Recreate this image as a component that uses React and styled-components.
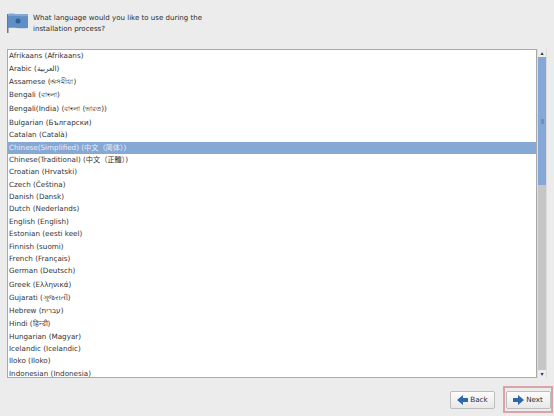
import React from "react"
import styled, { createGlobalStyle } from "styled-components"

const languages = [
	{ name: "Afrikaans (Afrikaans)", h: 12.5 },
	{ name: "Arabic (العربية)", h: 12.5 },
	{ name: "Assamese (অসমীয়া)", h: 13 },
	{ name: "Bengali (বাংলা)", h: 13.5 },
	{ name: "Bengali(India) (বাংলা (ভারত))", h: 14 },
	{ name: "Bulgarian (Български)", h: 13.5 },
	{ name: "Catalan (Català)", h: 12.5 },
	{ name: "Chinese(Simplified) (中文（简体）)", selected: true },
	{ name: "Chinese(Traditional) (中文（正體）)" },
	{ name: "Croatian (Hrvatski)" },
	{ name: "Czech (Čeština)" },
	{ name: "Danish (Dansk)" },
	{ name: "Dutch (Nederlands)" },
	{ name: "English (English)" },
	{ name: "Estonian (eesti keel)" },
	{ name: "Finnish (suomi)" },
	{ name: "French (Français)" },
	{ name: "German (Deutsch)" },
	{ name: "Greek (Ελληνικά)", h: 13 },
	{ name: "Gujarati (ગુજરાતી)", h: 13 },
	{ name: "Hebrew (עברית)", h: 13 },
	{ name: "Hindi (हिन्दी)", h: 13 },
	{ name: "Hungarian (Magyar)", h: 13 },
	{ name: "Icelandic (Icelandic)", h: 12.6 },
	{ name: "Iloko (Iloko)", h: 12.6 },
	{ name: "Indonesian (Indonesia)" },
]

const Flag = () => (
	<svg width="21" height="20" viewBox="0 0 21 20">
		<rect x="0" y="1" width="1.5" height="19" fill="#6f7a78" />
		<path d="M1 1 C6 0 10 2 21 1 L21 15 C12 16 7 14 1 15 Z" fill="#5f8fc4" />
		<path d="M1 1 C6 0 10 2 21 1 L21 3 C12 4 7 2 1 3 Z" fill="#86a9d2" />
		<circle cx="11" cy="8" r="2.5" fill="#2f5f9c" />
	</svg>
)

const Arrow = ({ flip }) => (
	<svg width="11" height="10" viewBox="0 0 11 10" style={{ transform: flip ? "scaleX(-1)" : "none" }}>
		<path d="M0 3 H5 V0 L11 5 L5 10 V7 H0 Z" fill="#2f68a6" />
	</svg>
)

const App = () => (
	<Page>
		<GlobalStyle />
		<Header>
			<Flag />
			<Question>What language would you like to use during the<br />installation process?</Question>
		</Header>
		<ListRow>
			<ListBox>
				{languages.map(l => (
					<Item key={l.name} $selected={l.selected} $h={l.h}>{l.name}</Item>
				))}
			</ListBox>
			<Scrollbar>
				<ScrollButton>▴</ScrollButton>
				<Thumb><Grip /></Thumb>
				<Track />
				<ScrollButton>▾</ScrollButton>
			</Scrollbar>
		</ListRow>
		<Footer>
			<Button><Arrow flip />Back</Button>
			<Highlight>
				<Button><Arrow />Next</Button>
			</Highlight>
		</Footer>
	</Page>
)

const GlobalStyle = createGlobalStyle`
	html, body {
		margin: 0;
		padding: 0;
		background: #ececec;
	}
`

const Page = styled.div`
	width: 554px;
	height: 416px;
	overflow: hidden;
	display: flex;
	flex-direction: column;
	font-family: "DejaVu Sans", "Noto Sans CJK SC", sans-serif;
	color: #2e2e2e;
	background: #ececec;
`

const Header = styled.div`
	display: flex;
	align-items: flex-start;
	gap: 5px;
	height: 36px;
	padding: 13px 0 0 7px;
`

const Question = styled.div`
	font-size: 7.05px;
	line-height: 10.5px;
`

const ListRow = styled.div`
	display: flex;
	height: 329px;
	padding-left: 7px;
`

const ListBox = styled.div`
	width: 530px;
	height: 100%;
	overflow: hidden;
	box-sizing: border-box;
	background: #fff;
	border: 1px solid #a9a9a9;
`

const Item = styled.div`
	height: ${p => p.$h || 12.4}px;
	line-height: ${p => p.$h || 12.4}px;
	padding-left: 1px;
	font-size: 7.2px;
	white-space: nowrap;
	color: ${p => p.$selected ? "#e8eef7" : "#333"};
	background: ${p => p.$selected ? "#86a8d4" : "transparent"};
`

const Scrollbar = styled.div`
	width: 8px;
	height: 100%;
	display: flex;
	flex-direction: column;
	padding: 0 1px;
	background: #dcdcdc;
`

const ScrollButton = styled.div`
	height: 8px;
	flex: none;
	background: #ededed;
	font-size: 6px;
	line-height: 8px;
	text-align: center;
	color: #333;
`

const Thumb = styled.div`
	height: 128px;
	flex: none;
	display: flex;
	align-items: center;
	justify-content: center;
	background: #86a8d8;
`

const Grip = styled.div`
	width: 3px;
	height: 5px;
	background: #6f90be;
`

const Track = styled.div`
	flex: 1;
	background: #c6c6c6;
`

const Footer = styled.div`
	display: flex;
	justify-content: flex-end;
	align-items: center;
	gap: 8px;
	padding: 8px 1px 0 0;
`

const Highlight = styled.div`
	display: flex;
	align-items: center;
	justify-content: center;
	width: 50px;
	height: 27px;
	box-sizing: border-box;
	border: 2px solid #d9a3a8;
`

const Button = styled.div`
	display: flex;
	align-items: center;
	justify-content: center;
	gap: 2px;
	width: 45px;
	height: 18px;
	box-sizing: border-box;
	font-size: 7.2px;
	background: linear-gradient(#fcfcfc, #e8e8e8);
	border: 1px solid #bdbdbd;
	border-radius: 2px;
`

export default App
